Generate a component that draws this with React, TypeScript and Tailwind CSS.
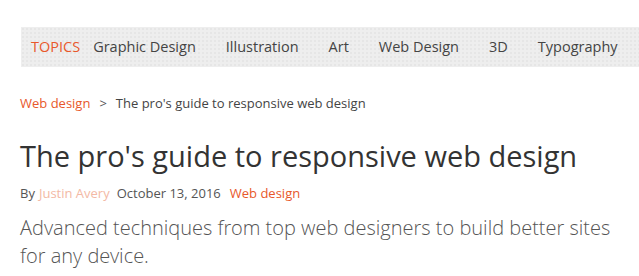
import React from "react";

const topics = ["Graphic Design", "Illustration", "Art", "Web Design", "3D", "Typography"];

export default function App() {
  return (
    <div className="w-[639px] h-[276px] bg-white overflow-hidden font-['Open_Sans',sans-serif] text-[#333]">
      {/* Topics bar */}
      <div className="pt-[27px] pl-[21px]">
        <nav className="h-10 flex items-center pl-[10px] bg-[#eeeeee] bg-[radial-gradient(#e6e6e6_1px,transparent_1px)] bg-[size:4px_4px]">
          <span className="text-[14.5px] text-[#e8582b] mr-[13px]">TOPICS</span>
          <ul className="flex gap-[30px] text-[14.5px] text-[#444]">
            {topics.map((t) => (
              <li key={t} className="whitespace-nowrap">{t}</li>
            ))}
          </ul>
        </nav>
      </div>

      <div className="pl-5 pr-4">
        {/* Breadcrumb */}
        <div className="mt-[26px] flex items-center text-[13px] leading-5">
          <span className="text-[#e8582b]">Web design</span>
          <span className="text-[#555] mx-[9px]">&gt;</span>
          <span className="text-[#444]">The pro's guide to responsive web design</span>
        </div>

        {/* Title */}
        <h1 className="mt-[25px] text-[29px] leading-9 text-[#333] whitespace-nowrap">
          The pro's guide to responsive web design
        </h1>

        {/* Byline */}
        <div className="mt-[9px] flex items-center text-[13px] leading-5 text-[#555]">
          <span>By</span>
          <span className="ml-1 text-[#f3b9a5]">Justin Avery</span>
          <span className="ml-[7px]">October 13, 2016</span>
          <span className="ml-[9px] text-[#e8582b]">Web design</span>
        </div>

        {/* Standfirst */}
        <p className="mt-[11px] font-['Open_Sans_Light','Open_Sans',sans-serif] text-[20px] font-light leading-7 text-[#555] w-[600px]">
          Advanced techniques from top web designers to build better sites for any device.
        </p>
      </div>
    </div>
  );
}
